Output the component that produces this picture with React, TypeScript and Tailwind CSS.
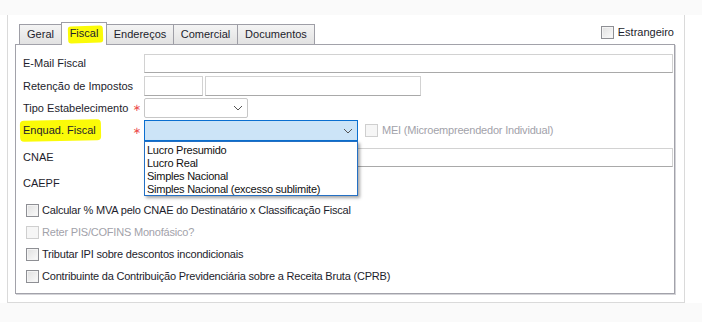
import React from "react";

const Box = ({ disabled = false }: { disabled?: boolean }) => (
  <span
    className={
      disabled
        ? "inline-block w-[13px] h-[13px] shrink-0 border border-[#cfcfcf] bg-[#f6f6f6]"
        : "inline-block w-[13px] h-[13px] shrink-0 border border-[#8e8f94] bg-gradient-to-br from-[#e0e0e0] to-[#fbfbfb] shadow-[inset_0_0_0_1px_#f4f4f4]"
    }
  />
);

const Chevron = () => (
  <svg width="10" height="6" viewBox="0 0 10 6" className="shrink-0">
    <path d="M1 1l4 4 4-4" fill="none" stroke="#555" strokeWidth="1" />
  </svg>
);

const Star = () => (
  <span className="ml-auto mr-[3px] text-[#ec4a4a] text-[10px] leading-none font-['DejaVu_Sans',sans-serif]">
    ∗
  </span>
);

const Tab = ({
  label,
  width,
  active = false,
  first = false,
}: {
  label: React.ReactNode;
  width: string;
  active?: boolean;
  first?: boolean;
}) => (
  <div
    className={[
      "flex items-center justify-center border border-b-0 border-[#9e9ea6]",
      width,
      first ? "" : "-ml-px",
      active
        ? "h-[23px] -mb-px bg-white relative z-10 pb-[2px]"
        : "h-[20px] bg-gradient-to-b from-[#f4f4f4] to-[#e2e2e2]",
    ].join(" ")}
  >
    {label}
  </div>
);

const Input = ({ width }: { width: string }) => (
  <div className={`${width} h-full bg-white border border-[#d2d2d2] border-b-[#a9a9a9]`} />
);

const App: React.FC = () => {
  return (
    <div className="w-[702px] h-[322px] bg-[#fafafa] font-['Liberation_Sans',Arial,sans-serif] text-[11px] text-[#1d1d2c] overflow-hidden">
      <div className="mt-[15px] h-[288px] bg-white">
        <div className="ml-[7px] w-[678px] h-full border-x border-b border-[#dadada] pl-[7px] pt-[7px]">
          {/* Tab control */}
          <div className="w-[660px]">
            <div className="relative z-10 flex items-end h-[22px] pl-[4px]">
              <Tab label="Geral" width="w-[43px]" first />
              <Tab
                label={
                  <span className="relative px-[1px]">
                    <span className="absolute left-[-1px] right-[-3px] top-[1px] bottom-[-1px] bg-[#fbfb08] rounded-[3px] -rotate-2" />
                    <span className="relative">Fiscal</span>
                  </span>
                }
                width="w-[46px]"
                active
              />
              <Tab label="Endereços" width="w-[68px]" />
              <Tab label="Comercial" width="w-[65px]" />
              <Tab label="Documentos" width="w-[78px]" />
              <div className="ml-auto mr-[1px] self-start mt-[2px] flex items-center gap-[4px]">
                <Box />
                <span>Estrangeiro</span>
              </div>
            </div>

            {/* Tab page */}
            <div className="h-[250px] bg-white border border-[#a2a2aa] shadow-[1px_1px_0_#d4d4d8] flex flex-col">
              <div className="flex items-center mt-[9px] h-[19px]">
                <div className="w-[128px] pl-[7px]">E-Mail Fiscal</div>
                <Input width="w-[529px]" />
              </div>

              <div className="flex items-center mt-[3px] h-[20px]">
                <div className="w-[128px] pl-[7px]">Retenção de Impostos</div>
                <Input width="w-[59px]" />
                <div className="w-[2px]" />
                <Input width="w-[216px]" />
              </div>

              <div className="flex items-center mt-[2px] h-[20px]">
                <div className="w-[128px] pl-[7px] flex items-center">
                  <span>Tipo Estabelecimento</span>
                  <Star />
                </div>
                <div className="w-[104px] h-full border border-[#c7c7c7] rounded-[2px] bg-white flex items-center justify-end pr-[4px]">
                  <Chevron />
                </div>
              </div>

              <div className="flex items-center mt-[2px] h-[21px]">
                <div className="w-[128px] pl-[7px] flex items-center">
                  <span className="relative">
                    <span className="absolute left-[-3px] right-[-5px] top-[-2px] bottom-[-2px] bg-[#fbfb08] rounded-[4px] -rotate-1" />
                    <span className="relative">Enquad. Fiscal</span>
                  </span>
                  <Star />
                </div>
                <div className="relative w-[214px] h-full">
                  <div className="w-full h-full border border-[#0a6fd0] bg-[#cce4f7] flex items-center justify-end pr-[4px]">
                    <Chevron />
                  </div>
                  <div className="absolute left-0 top-full w-[214px] h-[55px] z-20 bg-white border border-[#2470c4] shadow-[2px_2px_3px_rgba(0,0,0,0.35)] pt-[2px] pl-[2px] leading-[13px] text-[#111] tracking-[-0.25px]">
                    <div>Lucro Presumido</div>
                    <div>Lucro Real</div>
                    <div>Simples Nacional</div>
                    <div>Simples Nacional (excesso sublimite)</div>
                  </div>
                </div>
                <div className="ml-[7px] flex items-center gap-[4px] text-[#a2a2aa] tracking-[-0.2px]">
                  <Box disabled />
                  <span>MEI (Microempreendedor Individual)</span>
                </div>
              </div>

              <div className="flex items-center mt-[7px] h-[19px]">
                <div className="w-[128px] pl-[7px]">CNAE</div>
                <Input width="w-[529px]" />
              </div>

              <div className="flex items-center mt-[7px] h-[19px]">
                <div className="w-[128px] pl-[7px]">CAEPF</div>
                <Input width="w-[150px]" />
              </div>

              <div className="flex flex-col mt-[6px] pl-[10px] tracking-[-0.2px]">
                <div className="flex items-center h-[22px] gap-[3px]">
                  <Box />
                  <span>Calcular % MVA pelo CNAE do Destinatário x Classificação Fiscal</span>
                </div>
                <div className="flex items-center h-[22px] gap-[3px] text-[#a2a2aa]">
                  <Box disabled />
                  <span>Reter PIS/COFINS Monofásico?</span>
                </div>
                <div className="flex items-center h-[22px] gap-[3px]">
                  <Box />
                  <span>Tributar IPI sobre descontos incondicionais</span>
                </div>
                <div className="flex items-center h-[22px] gap-[3px]">
                  <Box />
                  <span>Contribuinte da Contribuição Previdenciária sobre a Receita Bruta (CPRB)</span>
                </div>
              </div>
            </div>
          </div>
        </div>
      </div>
    </div>
  );
};

export default App;
